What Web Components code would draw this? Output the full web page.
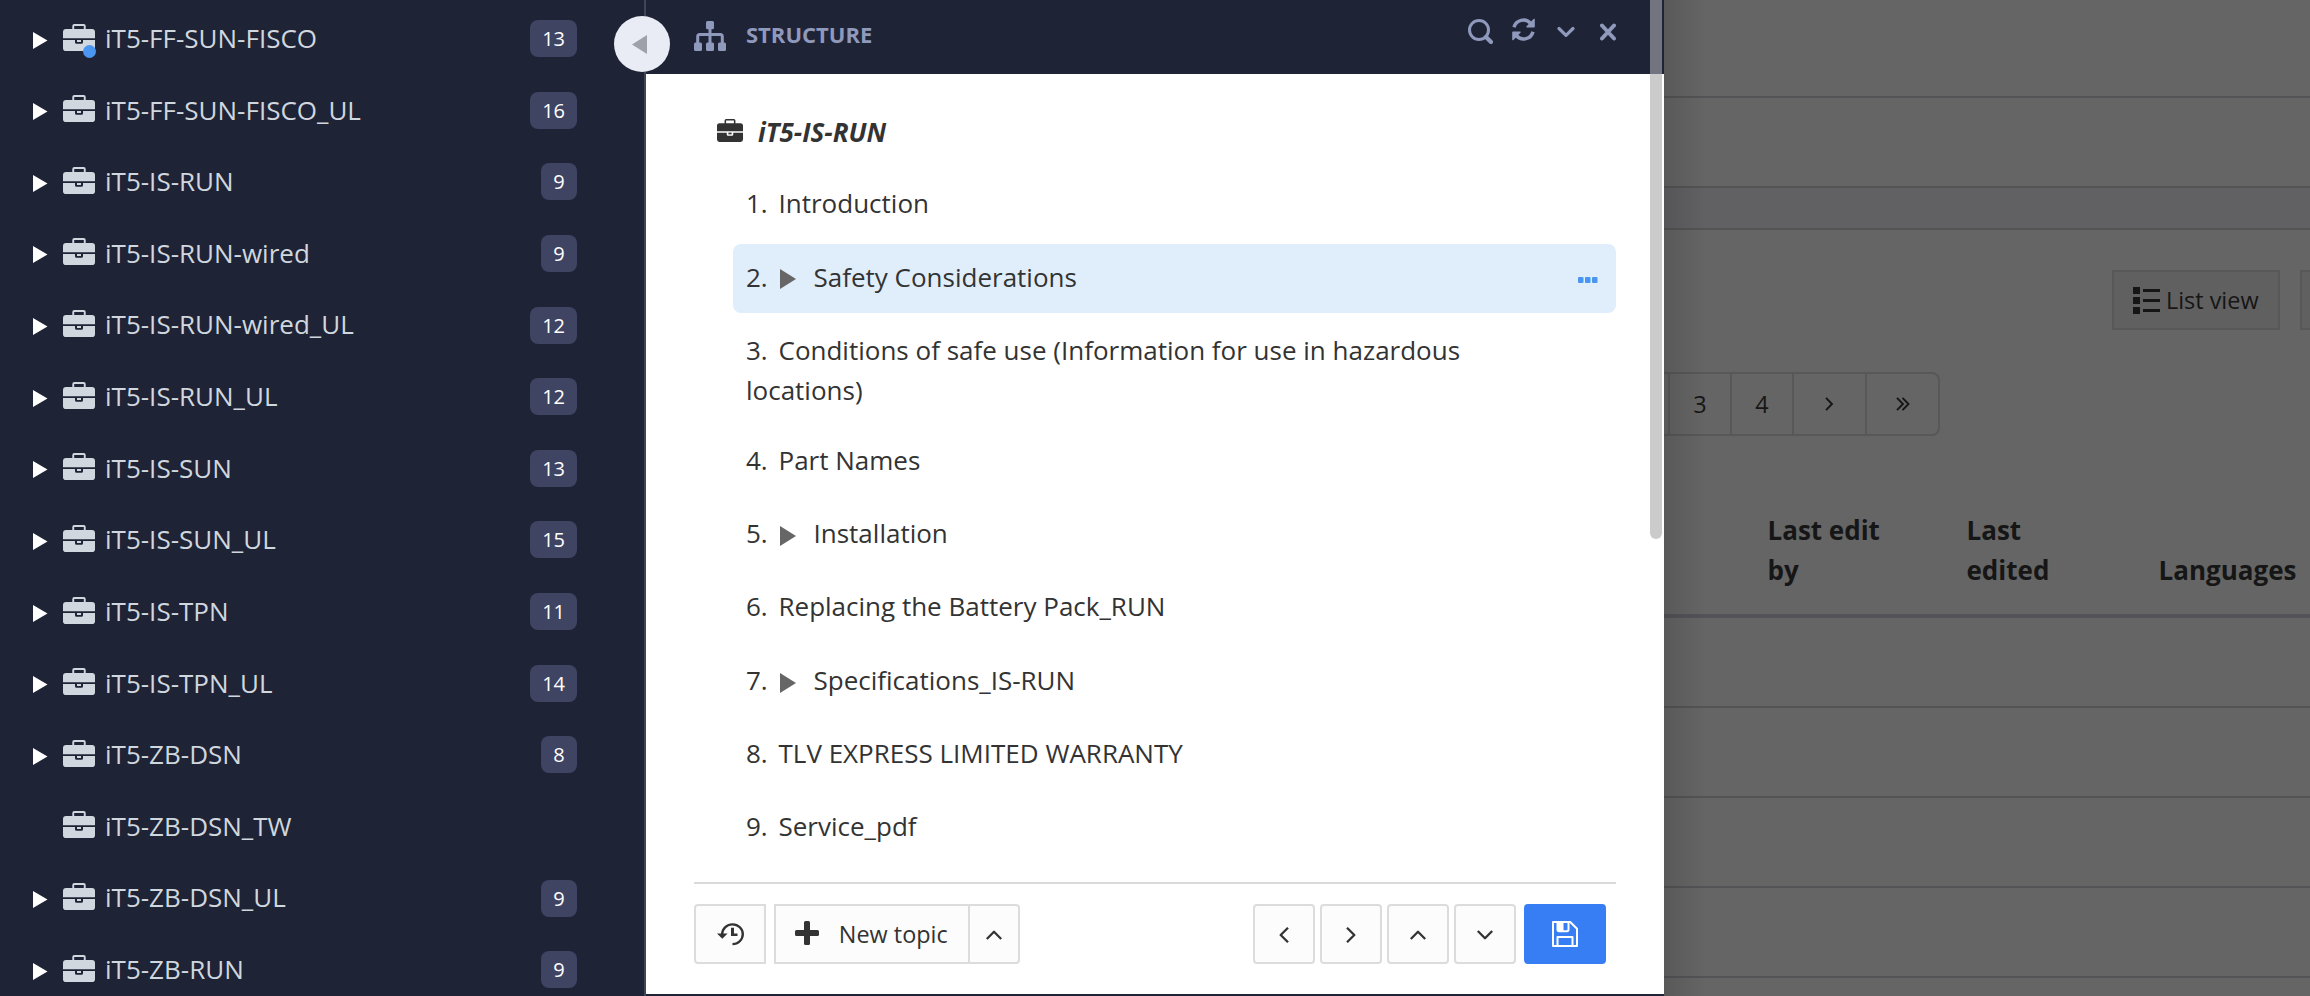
<!DOCTYPE html>
<html lang="en">
<head>
<meta charset="utf-8">
<title>Structure</title>
<style>
html,body{margin:0;height:100%;overflow:hidden;background:#1f2336}
body{font-family:"Open Sans","Noto Sans",sans-serif;font-size:26px;line-height:40px;color:#333}
</style>
</head>
<body>
<app-shell>
  <project-sidebar slot="side">
    <project-item count="13" dot>iT5-FF-SUN-FISCO</project-item>
    <project-item count="16">iT5-FF-SUN-FISCO_UL</project-item>
    <project-item count="9">iT5-IS-RUN</project-item>
    <project-item count="9">iT5-IS-RUN-wired</project-item>
    <project-item count="12">iT5-IS-RUN-wired_UL</project-item>
    <project-item count="12">iT5-IS-RUN_UL</project-item>
    <project-item count="13">iT5-IS-SUN</project-item>
    <project-item count="15">iT5-IS-SUN_UL</project-item>
    <project-item count="11">iT5-IS-TPN</project-item>
    <project-item count="14">iT5-IS-TPN_UL</project-item>
    <project-item count="8">iT5-ZB-DSN</project-item>
    <project-item>iT5-ZB-DSN_TW</project-item>
    <project-item count="9">iT5-ZB-DSN_UL</project-item>
    <project-item count="9">iT5-ZB-RUN</project-item>
  </project-sidebar>
  <structure-panel slot="panel">
    <topic-item num="1">Introduction</topic-item>
    <topic-item num="2" parent selected>Safety Considerations</topic-item>
    <topic-item num="3" tall>Conditions of safe use (Information for use in hazardous<br>locations)</topic-item>
    <topic-item num="4">Part Names</topic-item>
    <topic-item num="5" parent>Installation</topic-item>
    <topic-item num="6">Replacing the Battery Pack_RUN</topic-item>
    <topic-item num="7" parent>Specifications_IS-RUN</topic-item>
    <topic-item num="8">TLV EXPRESS LIMITED WARRANTY</topic-item>
    <topic-item num="9">Service_pdf</topic-item>
  </structure-panel>
  <content-area slot="main"></content-area>
</app-shell>
<script>
const ICONS = {
  briefcase: ['0 0 32 27', '<path fill="currentColor" fill-rule="evenodd" d="M9.3 5V2Q9.3 0 11.3 0H20.7Q22.700 0 22.700 2V5H29Q32 5 32 8V14.300H0V8Q0 5 3 5ZM11.200 5H20.800V1.900H11.200Z"/><path fill="currentColor" d="M0 16H12V18.200Q12 19.700 13.500 19.700H18.500Q20 19.700 20 18.200V16H32V24.200Q32 27 29 27H3Q0 27 0 24.200Z"/><path fill="currentColor" d="M14 16H18V18H14Z"/>'],
  sitemap: ['0 0 32 30', '<g fill="currentColor"><rect x="12" y="0" width="8" height="8.300" rx="1.500"/><rect x="0" y="21.500" width="8" height="8.500" rx="1.500"/><rect x="12" y="21.500" width="8" height="8.500" rx="1.500"/><rect x="24" y="21.500" width="8" height="8.500" rx="1.500"/></g><path fill="none" stroke="currentColor" stroke-width="3" d="M16 7V23M3.700 23V15.500Q3.700 13.500 5.700 13.500H26.300Q28.300 13.500 28.300 15.500V23"/>'],
  search: ['0 0 25 25', '<circle cx="11" cy="11" r="9.500" fill="none" stroke="currentColor" stroke-width="3"/><path d="M18 18L23 23" stroke="currentColor" stroke-width="4.200" stroke-linecap="round"/>'],
  sync: ['0 0 23 23', '<g fill="none" stroke="currentColor" stroke-width="3.500"><path d="M2 9.300A9.700 9.700 0 0 1 18.500 5.200"/><path d="M21 13.700A9.700 9.700 0 0 1 4.500 17.800"/></g><path fill="currentColor" d="M22.800 1V8.800Q22.800 9.500 22 9.500H14.600Q14 8.800 14.600 8.200L21.500 1Q22.300 .3 22.800 1ZM.2 22V14.200Q.2 13.500 1 13.500H8.400Q9 14.200 8.400 14.800L1.500 22Q.7 22.700 .2 22Z"/>'],
  down: ['0 0 18 12', '<path fill="none" stroke="currentColor" stroke-width="3.200" stroke-linecap="round" stroke-linejoin="round" d="M2 2.500L9 9.300L16 2.500"/>'],
  close: ['0 0 16 18', '<path fill="none" stroke="currentColor" stroke-width="4" stroke-linecap="round" d="M2 2.500L14 15.500M14 2.500L2 15.500"/>'],
  plus: ['0 0 24 24', '<path fill="currentColor" d="M9 1.500Q9 0 10.500 0H13.500Q15 0 15 1.500V9H22.500Q24 9 24 10.500V13.500Q24 15 22.500 15H15V22.500Q15 24 13.500 24H10.500Q9 24 9 22.500V15H1.500Q0 15 0 13.500V10.500Q0 9 1.500 9H9Z"/>'],
  history: ['0 0 27 24', '<path fill="none" stroke="currentColor" stroke-width="2.400" d="M5.200 11.500A10.300 10.300 0 1 1 15.500 22"/><path fill="currentColor" d="M0 11H10.600L5.300 16.500ZM14 5H17V11H20.500V13.500H14Z"/>'],
  left: ['0 0 10 16', '<path fill="none" stroke="currentColor" stroke-width="2.300" stroke-linejoin="round" d="M9 .8L1.700 8L9 15.200"/>'],
  right: ['0 0 10 16', '<path fill="none" stroke="currentColor" stroke-width="2.300" stroke-linejoin="round" d="M1 .8L8.300 8L1 15.200"/>'],
  up: ['0 0 16 10', '<path fill="none" stroke="currentColor" stroke-width="2.300" stroke-linejoin="round" d="M.8 9L8 1.700L15.200 9"/>'],
  lower: ['0 0 16 10', '<path fill="none" stroke="currentColor" stroke-width="2.300" stroke-linejoin="round" d="M.8 1L8 8.300L15.200 1"/>'],
  save: ['0 0 26 26', '<path fill="none" stroke="currentColor" stroke-width="2" stroke-linejoin="round" d="M1 1H18.200L25 7.800V25H1ZM5.500 1V8.500Q5.500 10.200 7 10.200H15Q16.500 10.200 16.500 8.500V1M5.500 25V16H20.500V25"/><path fill="currentColor" d="M5 1H11.500V10H5Z"/>'],
  list: ['0 0 27 27', '<path fill="currentColor" d="M0 0H7V7H0ZM0 10H7V17H0ZM0 20H7V27H0ZM10 2H27V5H10ZM10 12H27V15H10ZM10 22H27V25H10Z"/>'],
  caret: ['0 0 16 20', '<path fill="currentColor" d="M0 0L16 10L0 20Z"/>'],
  caretleft: ['0 0 15 19', '<path fill="currentColor" d="M15 0L0 9.500L15 19Z"/>'],
  dots: ['0 0 20 6', '<path fill="currentColor" d="M1 0H4.500Q5.500 0 5.500 1V5Q5.500 6 4.500 6H1Q0 6 0 5V1Q0 0 1 0ZM8 0H11.500Q12.500 0 12.500 1V5Q12.500 6 11.500 6H8Q7 6 7 5V1Q7 0 8 0ZM15 0H18.500Q19.500 0 19.500 1V5Q19.500 6 18.500 6H15Q14 6 14 5V1Q14 0 15 0Z"/>'],
  next: ['0 0 9 14', '<path fill="none" stroke="currentColor" stroke-width="1.900" d="M1 .8L7 7L1 13.200"/>'],
  last: ['0 0 14 14', '<path fill="none" stroke="currentColor" stroke-width="1.900" d="M1 .8L7 7L1 13.200M6.500 .8L12.500 7L6.500 13.200"/>']
};
class UiIcon extends HTMLElement {
  connectedCallback() {
    const [box, art] = ICONS[this.getAttribute('name')];
    this.attachShadow({mode: 'open'}).innerHTML = `<style>:host{display:block;flex:none}svg{display:block;width:100%;height:100%}</style><svg viewBox="${box}" preserveAspectRatio="none" aria-hidden="true">${art}</svg>`;
  }
}
customElements.define('ui-icon', UiIcon);

function define(name, render) {
  customElements.define(name, class extends HTMLElement {
    connectedCallback() {
      if (!this.shadowRoot) this.attachShadow({mode: 'open'}).innerHTML = render(this);
    }
  });
}

define('app-shell', () => `<style>
:host{display:grid;grid-template-columns:646px 1018px 1fr;height:996px;overflow:hidden}
::slotted(*){min-width:0}
</style><slot name="side"></slot><slot name="panel"></slot><slot name="main"></slot>`);

define('project-sidebar', () => `<style>
:host{display:flex;flex-direction:column;box-sizing:border-box;height:996px;padding-top:2.700px;border-right:2px solid #3c4757;background:#1f2336;color:#d0d7de;overflow:hidden}
</style><slot></slot>`);

define('project-item', el => `<style>
:host{display:flex;flex:none;align-items:center;height:71.630px;padding:0 67px 0 33px;box-sizing:border-box;white-space:nowrap}
.arrow{width:14.500px;height:17px;color:#fff;margin-top:3px}
.gap{width:14.500px}
.case{position:relative;margin:-3px 10.500px 0 15px}
.case ui-icon{width:32px;height:27px;color:#d0d7de}
.dot{position:absolute;left:20.500px;top:21px;width:13px;height:13px;border-radius:50%;background:#4a96f0}
.name{flex:1;margin-top:-1.200px}
.badge{box-sizing:border-box;min-width:36px;text-align:center;height:37px;line-height:37px;padding:0 12px;border-radius:8px;background:#3f4463;color:#fff;font-size:20px}
</style>${el.hasAttribute('count') ? '<ui-icon class="arrow" name="caret"></ui-icon>' : '<span class="gap"></span>'}
<div class="case"><ui-icon name="briefcase"></ui-icon>${el.hasAttribute('dot') ? '<i class="dot"></i>' : ''}</div>
<span class="name"><slot></slot></span>${el.hasAttribute('count') ? `<span class="badge">${el.getAttribute('count')}</span>` : ''}`);

define('topic-item', el => `<style>
:host{display:flex;flex:none;box-sizing:border-box;height:${el.hasAttribute('tall') ? 106 : 69}px;padding:${el.hasAttribute('parent') ? 12.8 : el.hasAttribute('tall') ? 13.2 : 12.3}px 18px 0 13px;border-radius:8px;${el.hasAttribute('selected') ? 'background:#e0eefc' : ''}}
.text{width:740px}
.num{display:inline-block;width:32.500px}
.caret{display:inline-block;width:16px;height:20px;color:#666;margin:0 18px 0 1px;vertical-align:-2.500px}
.more{width:20px;height:6px;color:#4a96f0;margin:20.200px 0 0 auto}
</style><div class="text"><span class="num">${el.getAttribute('num')}.</span>${el.hasAttribute('parent') ? '<ui-icon class="caret" name="caret"></ui-icon>' : ''}<slot></slot></div>${el.hasAttribute('selected') ? '<ui-icon class="more" name="dots"></ui-icon>' : ''}`);

define('tool-button', el => `<style>
:host{display:flex;align-items:center;justify-content:center;box-sizing:border-box;height:60px;width:62px;border:2px solid #dcdcdc;border-radius:4px;background:#fcfcfc;font-size:23.400px;color:#333}
</style><slot></slot>`);

define('structure-panel', () => `<style>
:host{display:flex;flex-direction:column;position:relative;height:994px;background:#fff}
header{display:flex;align-items:center;flex:none;height:74px;box-sizing:border-box;padding:0 48px;background:#1f2336;color:#8f99bc}
.site{width:32px;height:30px;margin:-2px 20px 0 0}
h2{margin:-6px auto 0 0;font-size:22px;font-weight:700;line-height:34px}
.search{width:25px;height:25px;margin:-12px 19px 0 0}
.sync{width:23px;height:23px;margin:-15px 22px 0 0}
.down{width:18px;height:12px;margin:-11px 25px 0 0}
.close{width:16px;height:18px;margin-top:-10px}
.title{display:flex;align-items:center;flex:none;height:40px;margin:37.500px 0 19px 71px;font-weight:700;font-style:italic}
.title ui-icon{width:26px;height:23px;margin:-3px 15px 0 0}
.list{display:flex;flex:1;flex-direction:column;gap:4.300px;margin:0 48px 0 87px}
footer{display:flex;flex:none;box-sizing:border-box;height:112px;margin:0 48px;padding:20px 10px 0 0;border-top:2px solid #dadada}
.hist{width:72px;border-radius:4px 0 0 4px;margin-right:8px}
.hist ui-icon{width:27px;height:23px}
.new{width:196px;border-radius:0}
.new ui-icon{width:24px;height:24px;margin:-3px 20px 0 -1.500px}
.drop{width:52px;margin:0 auto 0 -2px;border-radius:0 4px 4px 0}
.h{width:16px;height:10px;margin-top:2px}.v{width:10px;height:16px;margin-top:2px}
.move{margin-right:5px}.final{margin-right:8px}
.save{width:82px;background:#377ef4;border-color:#377ef4;color:#fff}
.save ui-icon{width:26px;height:26px}
.toggle{position:absolute;z-index:2;left:-32px;top:16px;width:56px;height:56px;border-radius:50%;background:#e9ebf5;color:#9fa1aa}
.toggle ui-icon{width:15px;height:19px;margin:18.500px 0 0 18px}
.thumb{position:absolute;left:1004px;top:0;width:12px;height:539px;background:linear-gradient(#72757f 74px,#cbcbcb 74px);border-radius:0 0 6px 6px}
</style>
<header><ui-icon class="site" name="sitemap"></ui-icon><h2>STRUCTURE</h2><ui-icon class="search" name="search"></ui-icon><ui-icon class="sync" name="sync"></ui-icon><ui-icon class="down" name="down"></ui-icon><ui-icon class="close" name="close"></ui-icon></header>
<div class="title"><ui-icon name="briefcase"></ui-icon><span>iT5-IS-RUN</span></div>
<div class="list"><slot></slot></div>
<footer>
<tool-button class="hist"><ui-icon name="history"></ui-icon></tool-button>
<tool-button class="new"><ui-icon name="plus"></ui-icon><span>New topic</span></tool-button>
<tool-button class="drop"><ui-icon class="h" name="up"></ui-icon></tool-button>
<tool-button class="move"><ui-icon class="v" name="left"></ui-icon></tool-button>
<tool-button class="move"><ui-icon class="v" name="right"></ui-icon></tool-button>
<tool-button class="move"><ui-icon class="h" name="up"></ui-icon></tool-button>
<tool-button class="final"><ui-icon class="h" name="lower"></ui-icon></tool-button>
<tool-button class="save"><ui-icon name="save"></ui-icon></tool-button>
</footer>
<div class="toggle"><ui-icon name="caretleft"></ui-icon></div>
<div class="thumb"></div>`);

define('content-area', () => `<style>
:host{display:flex;flex-direction:column;position:relative;height:996px;background:#656565;color:#161616;overflow:hidden}
:host::after{content:"";position:absolute;inset:0 auto 0 0;width:42px;background:linear-gradient(90deg,rgba(0,0,0,.12),transparent)}
.bar{flex:none;box-sizing:border-box;border-bottom:2px solid #545456}
.views{display:flex;flex:none;gap:20px;margin:40px 0 0 448px;font-size:23.400px}
.view{display:flex;flex:none;align-items:center;box-sizing:border-box;width:168px;height:60px;border:2px solid #585858;background:#606060;padding-left:19px;white-space:nowrap}
.view ui-icon{width:27px;height:27px;margin-right:6px}
.pages{display:flex;flex:none;align-self:flex-start;box-sizing:border-box;height:64px;margin-top:42px;border:2px solid #585858;border-left:0;border-radius:0 8px 8px 0;font-size:23.400px}
.pages>*{display:flex;align-items:center;justify-content:center;box-sizing:border-box;width:62px;border-left:2px solid #585858}
.pages .lead{width:4px;border:0}.pages .wide{width:73px}
.thead{display:flex;flex:none;align-items:flex-end;box-sizing:border-box;height:182px;padding:0 0 24px 103.500px;border-bottom:4px solid #545458;font-weight:700}
.thead>*{flex:none}
.thead :nth-child(1){width:115px;margin-right:84px}
.thead :nth-child(2){width:90px;margin-right:102px}
.row{height:90px}
</style>
<div class="bar" style="height:98px"></div>
<div class="bar" style="height:90px"></div>
<div class="bar" style="height:42px;background:#616164"></div>
<div class="views"><div class="view"><ui-icon name="list"></ui-icon><span>List view</span></div><div class="view"></div></div>
<div class="pages"><span class="lead"></span><span>3</span><span>4</span><span class="wide"><ui-icon name="next" style="width:9px;height:14px"></ui-icon></span><span class="wide"><ui-icon name="last" style="width:14px;height:14px"></ui-icon></span></div>
<div class="thead"><span>Last edit<br>by</span><span>Last<br>edited</span><span>Languages</span></div>
<div class="bar row"></div><div class="bar row"></div><div class="bar row"></div><div class="bar row"></div>`);
</script>
</body>
</html>
